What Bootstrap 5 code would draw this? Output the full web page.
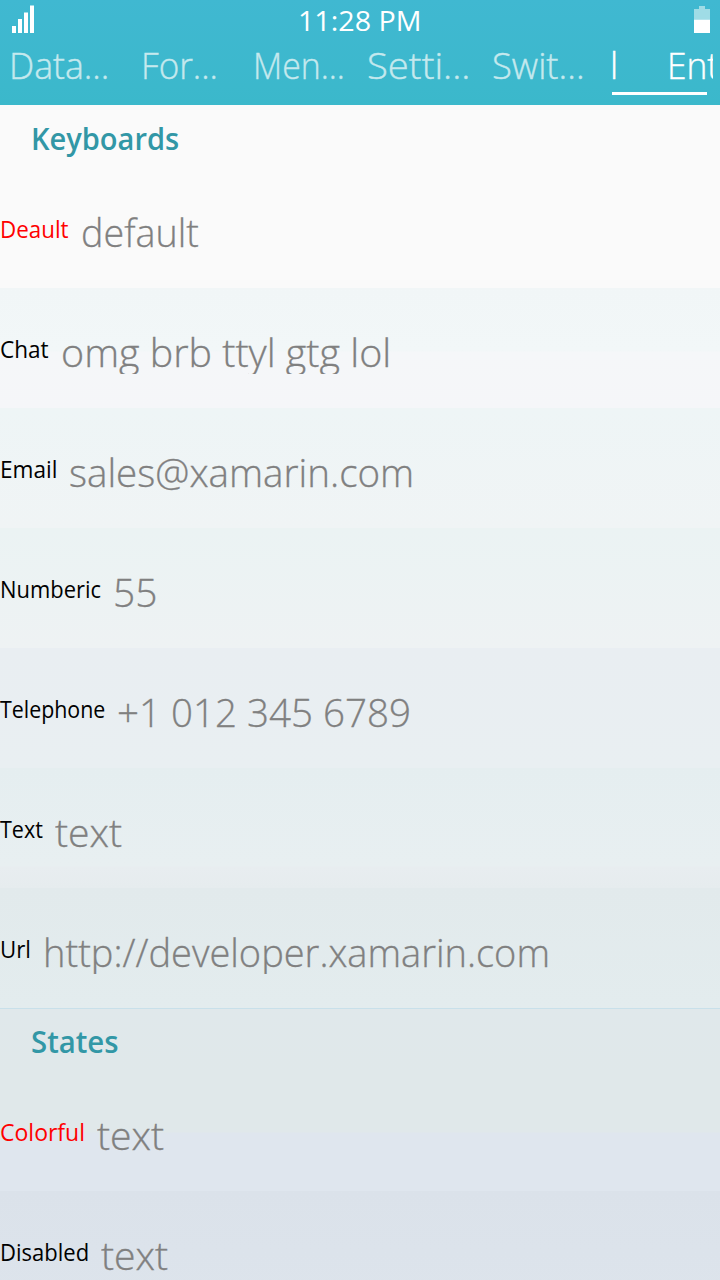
<!DOCTYPE html>
<html lang="en">
<head>
<meta charset="utf-8">
<meta name="viewport" content="width=device-width, initial-scale=1">
<title>Entry Cells</title>
<link href="https://cdn.jsdelivr.net/npm/bootstrap@5.3.0/dist/css/bootstrap.min.css" rel="stylesheet">
<style>
body{font-family:"Open Sans","Noto Sans",sans-serif;width:720px;height:1280px;overflow:hidden;background:#dce3eb}
.fit{display:block;flex:none;white-space:pre;overflow:visible}
.fit>span{display:inline-block;transform-origin:0 50%}
.topbar{height:105px;background:linear-gradient(#40b8d1,#3bb8cb)}
.status{height:40px;padding:0 6px 0 12px}
.clock{font-size:27px;line-height:41px;color:#fff;font-weight:400;margin-right:8px}
.tabs{height:65px;font-size:36px;font-weight:300;line-height:51px;color:#c5e9ee;-webkit-text-stroke:.4px currentColor}
.tab-on{color:#fff;border-bottom:3px solid #fff;height:55px}
.next-tab{color:#fff;overflow:hidden;width:46px;height:55px}
.head{height:63px;padding-left:31px;font-size:30px;font-weight:600;line-height:68px;color:#3297a6}
.cell{height:120px}
.lab{font-size:23px;line-height:32px;margin-top:45px;color:#000;margin-right:12px}
.lab.hot{color:#f00}
.field{font-size:38px;font-weight:300;line-height:68px;height:56px;margin-top:30px;color:#808080;overflow:hidden;-webkit-text-stroke:.3px currentColor}
.states{border-top:1px solid #c8e0ea;line-height:66px}
</style>
</head>
<body>
<header class="topbar">
  <div class="status d-flex justify-content-between">
    <svg width="24" height="40" viewBox="0 0 24 40" fill="#fff"><path d="M0 26h4v7H0zM6 19h4v14H6zM12 12.500h4V33h-4zM18 5.500h4V33h-4z"/></svg>
    <div class="clock fit" data-w="123"><span>11:28 PM</span></div>
    <svg width="24" height="40" viewBox="0 0 24 40"><path d="M4 9h5V6h6v3h5v10.500H4z" fill="#9fdce6"/><path d="M4 19.500h16V33H4z" fill="#fff"/></svg>
  </div>
  <nav class="tabs d-flex">
    <div class="fit" style="margin-left:9px" data-w="100"><span>Data...</span></div>
    <div class="fit" style="margin-left:32px" data-w="77"><span>For...</span></div>
    <div class="fit" style="margin-left:35px" data-w="92"><span>Men...</span></div>
    <div class="fit" style="margin-left:22px" data-w="103"><span>Setti...</span></div>
    <div class="fit" style="margin-left:22px" data-w="93"><span>Swit...</span></div>
    <div class="tab-on" style="margin-left:27px;width:95px"><span style="margin-left:-2px">l</span></div>
    <div class="next-tab" style="margin-left:-40px"><div class="fit" data-w="52"><span>Ent</span></div></div>
  </nav>
</header>
<main>
  <h2 class="head m-0 d-flex" style="background:#fafafa"><span class="fit" data-w="148"><span>Keyboards</span></span></h2>
  <div class="cell d-flex" style="background:#fafafa"><div class="lab hot fit" data-w="69"><span>Deault</span></div><div class="field fit" data-w="118"><span>default</span></div></div>
  <div class="cell d-flex" style="background:linear-gradient(#f1f6f7,#f2f7f8 63px,#f5f7f9 64px,#f5f6f9)"><div class="lab fit" data-w="49"><span>Chat</span></div><div class="field fit" data-w="330"><span>omg brb ttyl gtg lol</span></div></div>
  <div class="cell d-flex" style="background:linear-gradient(#eef5f6,#f0f4f5)"><div class="lab fit" data-w="57"><span>Email</span></div><div class="field fit" data-w="345"><span>sales@xamarin.com</span></div></div>
  <div class="cell d-flex" style="background:linear-gradient(#ebf3f3,#eef2f3)"><div class="lab fit" data-w="101"><span>Numberic</span></div><div class="field fit" data-w="44"><span>55</span></div></div>
  <div class="cell d-flex" style="background:linear-gradient(#e9eef2,#e9eff2)"><div class="lab fit" data-w="105"><span>Telephone</span></div><div class="field fit" data-w="294"><span>+1 012 345 6789</span></div></div>
  <div class="cell d-flex" style="background:linear-gradient(#e5eef0,#e8eff1 98px,#e8edf0 99px,#e6ecee)"><div class="lab fit" data-w="43"><span>Text</span></div><div class="field fit" data-w="67"><span>text</span></div></div>
  <div class="cell d-flex" style="background:linear-gradient(#e2eaec,#e3ecee)"><div class="lab fit" data-w="31"><span>Url</span></div><div class="field fit" data-w="507"><span>http://developer.xamarin.com</span></div></div>
  <h2 class="head states m-0 d-flex" style="background:linear-gradient(#e0e8eb,#e0e8ea)"><span class="fit" data-w="88"><span>States</span></span></h2>
  <div class="cell d-flex" style="background:linear-gradient(#e0e8ea,#e0e8ea 61px,#dfe6ee 62px,#dfe6ee)"><div class="lab hot fit" data-w="85"><span>Colorful</span></div><div class="field fit" data-w="67"><span>text</span></div></div>
  <div class="cell d-flex" style="background:linear-gradient(#dbe2ea,#dde4ec)"><div class="lab fit" data-w="89"><span>Disabled</span></div><div class="field fit" data-w="67"><span>text</span></div></div>
</main>
<script src="https://cdn.jsdelivr.net/npm/bootstrap@5.3.0/dist/js/bootstrap.bundle.min.js"></script>
<script>
// Condense or widen each label so it fills its column width.
document.querySelectorAll('.fit').forEach(function(el){
  var s=el.firstElementChild,w=+el.dataset.w,n=s.offsetWidth;
  el.style.width=w+'px';
  s.style.transform='scaleX('+(w/n)+')';
});
</script>
</body>
</html>
